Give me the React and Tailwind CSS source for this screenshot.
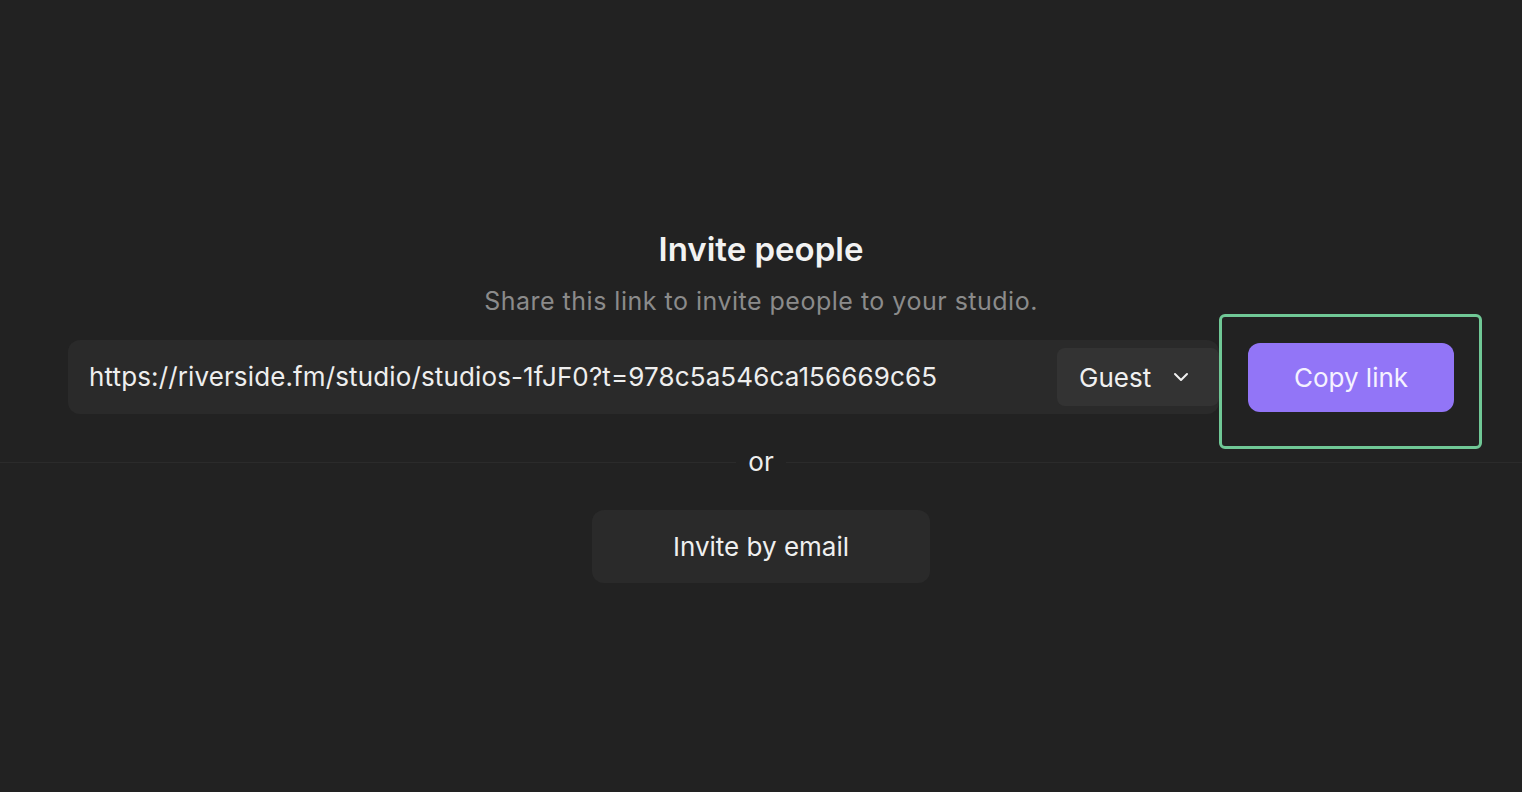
import { ChevronDown } from 'lucide-react';

// Invite panel: link row with role select, copy button (highlighted), then
// the "or" divider and the email fallback.
export default function App() {
  return (
    <div
      className="flex h-[792px] w-full flex-col items-center bg-[#222222] pt-[230px] text-[#efefef]"
      style={{ fontFamily: 'Inter, "Noto Sans", sans-serif' }}
    >
      <h1 className="text-[33px] font-semibold leading-[38px] text-[#f2f2f2]">Invite people</h1>
      <p className="mt-[18px] text-[25px] leading-[30px] tracking-[0.02em] text-[#8b8b8b]">
        Share this link to invite people to your studio.
      </p>

      <div className="mt-[24px] flex w-[1386px] items-center gap-[29px]">
        <div className="flex h-[74px] min-w-0 flex-1 items-center rounded-xl bg-[#2a2a2a] pl-[21px]">
          <span className="flex-1 truncate text-[26px] leading-[32px] tracking-[0.005em] text-[#eeeeee]">
            https://riverside.fm/studio/studios-1fJF0?t=978c5a546ca156669c65
          </span>
          <button
            type="button"
            className="flex h-[58px] w-[162px] items-center gap-[18px] rounded-lg bg-[#333333] pl-[22px] text-[26px] text-[#f0f0f0]"
          >
            Guest
            <ChevronDown className="size-[24px]" strokeWidth={2} />
          </button>
        </div>
        <div className="relative">
          <button
            type="button"
            className="flex h-[69px] w-[206px] items-center justify-center rounded-xl bg-[#9275f7] text-[26px] text-[#f5f2ff]"
          >
            Copy link
          </button>
          <div className="pointer-events-none absolute -top-[29px] -bottom-[37px] -left-[29px] -right-[28px] rounded-md border-[3px] border-[#70c896]" />
        </div>
      </div>

      <div className="mt-[32px] flex w-full items-center">
        <div className="h-px flex-1 bg-[#2b2b2b]" />
        <span className="px-[12px] text-[26px] leading-[32px] text-[#eeeeee]">or</span>
        <div className="h-px flex-1 bg-[#2b2b2b]" />
      </div>

      <button
        type="button"
        className="mt-[32px] flex h-[73px] w-[338px] items-center justify-center rounded-xl bg-[#2a2a2a] text-[26px] text-[#efefef]"
      >
        Invite by email
      </button>
    </div>
  );
}
